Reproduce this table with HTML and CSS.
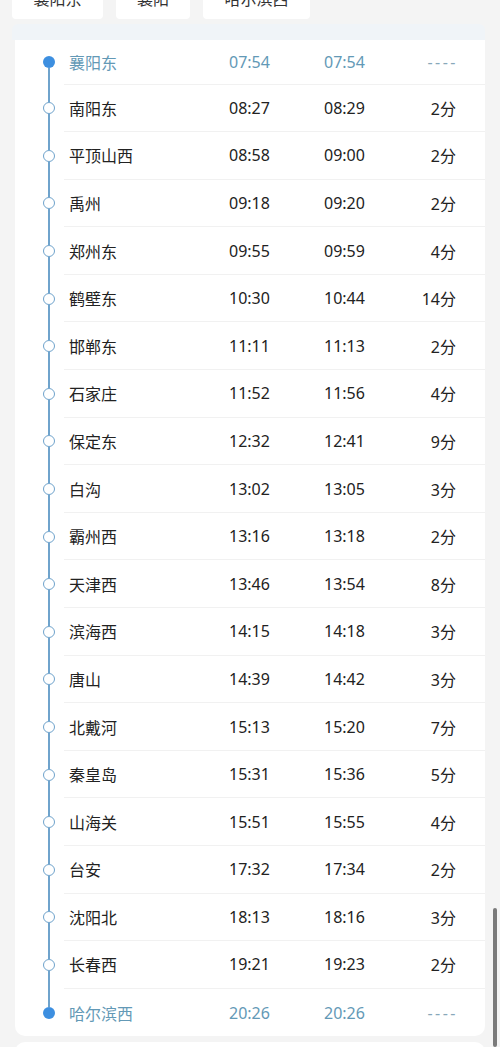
FILE: index.html
```html
<!DOCTYPE html>
<html lang="zh-CN">
<head>
  <meta charset="UTF-8">
  <meta name="viewport" content="width=device-width, initial-scale=1.0">
  <title>经停站</title>
  <link rel="stylesheet" href="styles.css">
</head>
<body>
  <div class="tabs">
    <div class="tab tab-a">襄阳东</div>
    <div class="tab tab-b">襄阳</div>
    <div class="tab tab-c">哈尔滨西</div>
  </div>

  <div class="panel">
    <div class="panel-head"></div>
    <div class="card">
      <div class="row first edge">
        <div class="node"><span class="seg hide"></span><span class="dot fill"></span><span class="seg"></span></div>
        <div class="info"><span class="name">襄阳东</span><span class="arr">07:54</span><span class="dep">07:54</span><span class="stay dash">----</span></div>
      </div>
      <div class="row">
        <div class="node"><span class="seg"></span><span class="dot"></span><span class="seg"></span></div>
        <div class="info"><span class="name">南阳东</span><span class="arr">08:27</span><span class="dep">08:29</span><span class="stay">2分</span></div>
      </div>
      <div class="row">
        <div class="node"><span class="seg"></span><span class="dot"></span><span class="seg"></span></div>
        <div class="info"><span class="name">平顶山西</span><span class="arr">08:58</span><span class="dep">09:00</span><span class="stay">2分</span></div>
      </div>
      <div class="row">
        <div class="node"><span class="seg"></span><span class="dot"></span><span class="seg"></span></div>
        <div class="info"><span class="name">禹州</span><span class="arr">09:18</span><span class="dep">09:20</span><span class="stay">2分</span></div>
      </div>
      <div class="row">
        <div class="node"><span class="seg"></span><span class="dot"></span><span class="seg"></span></div>
        <div class="info"><span class="name">郑州东</span><span class="arr">09:55</span><span class="dep">09:59</span><span class="stay">4分</span></div>
      </div>
      <div class="row">
        <div class="node"><span class="seg"></span><span class="dot"></span><span class="seg"></span></div>
        <div class="info"><span class="name">鹤壁东</span><span class="arr">10:30</span><span class="dep">10:44</span><span class="stay">14分</span></div>
      </div>
      <div class="row">
        <div class="node"><span class="seg"></span><span class="dot"></span><span class="seg"></span></div>
        <div class="info"><span class="name">邯郸东</span><span class="arr">11:11</span><span class="dep">11:13</span><span class="stay">2分</span></div>
      </div>
      <div class="row">
        <div class="node"><span class="seg"></span><span class="dot"></span><span class="seg"></span></div>
        <div class="info"><span class="name">石家庄</span><span class="arr">11:52</span><span class="dep">11:56</span><span class="stay">4分</span></div>
      </div>
      <div class="row">
        <div class="node"><span class="seg"></span><span class="dot"></span><span class="seg"></span></div>
        <div class="info"><span class="name">保定东</span><span class="arr">12:32</span><span class="dep">12:41</span><span class="stay">9分</span></div>
      </div>
      <div class="row">
        <div class="node"><span class="seg"></span><span class="dot"></span><span class="seg"></span></div>
        <div class="info"><span class="name">白沟</span><span class="arr">13:02</span><span class="dep">13:05</span><span class="stay">3分</span></div>
      </div>
      <div class="row">
        <div class="node"><span class="seg"></span><span class="dot"></span><span class="seg"></span></div>
        <div class="info"><span class="name">霸州西</span><span class="arr">13:16</span><span class="dep">13:18</span><span class="stay">2分</span></div>
      </div>
      <div class="row">
        <div class="node"><span class="seg"></span><span class="dot"></span><span class="seg"></span></div>
        <div class="info"><span class="name">天津西</span><span class="arr">13:46</span><span class="dep">13:54</span><span class="stay">8分</span></div>
      </div>
      <div class="row">
        <div class="node"><span class="seg"></span><span class="dot"></span><span class="seg"></span></div>
        <div class="info"><span class="name">滨海西</span><span class="arr">14:15</span><span class="dep">14:18</span><span class="stay">3分</span></div>
      </div>
      <div class="row">
        <div class="node"><span class="seg"></span><span class="dot"></span><span class="seg"></span></div>
        <div class="info"><span class="name">唐山</span><span class="arr">14:39</span><span class="dep">14:42</span><span class="stay">3分</span></div>
      </div>
      <div class="row">
        <div class="node"><span class="seg"></span><span class="dot"></span><span class="seg"></span></div>
        <div class="info"><span class="name">北戴河</span><span class="arr">15:13</span><span class="dep">15:20</span><span class="stay">7分</span></div>
      </div>
      <div class="row">
        <div class="node"><span class="seg"></span><span class="dot"></span><span class="seg"></span></div>
        <div class="info"><span class="name">秦皇岛</span><span class="arr">15:31</span><span class="dep">15:36</span><span class="stay">5分</span></div>
      </div>
      <div class="row">
        <div class="node"><span class="seg"></span><span class="dot"></span><span class="seg"></span></div>
        <div class="info"><span class="name">山海关</span><span class="arr">15:51</span><span class="dep">15:55</span><span class="stay">4分</span></div>
      </div>
      <div class="row">
        <div class="node"><span class="seg"></span><span class="dot"></span><span class="seg"></span></div>
        <div class="info"><span class="name">台安</span><span class="arr">17:32</span><span class="dep">17:34</span><span class="stay">2分</span></div>
      </div>
      <div class="row">
        <div class="node"><span class="seg"></span><span class="dot"></span><span class="seg"></span></div>
        <div class="info"><span class="name">沈阳北</span><span class="arr">18:13</span><span class="dep">18:16</span><span class="stay">3分</span></div>
      </div>
      <div class="row">
        <div class="node"><span class="seg"></span><span class="dot"></span><span class="seg"></span></div>
        <div class="info"><span class="name">长春西</span><span class="arr">19:21</span><span class="dep">19:23</span><span class="stay">2分</span></div>
      </div>
      <div class="row last edge">
        <div class="node"><span class="seg"></span><span class="dot fill"></span><span class="seg hide"></span></div>
        <div class="info"><span class="name">哈尔滨西</span><span class="arr">20:26</span><span class="dep">20:26</span><span class="stay dash">----</span></div>
      </div>
    </div>
  </div>
  <div class="next-card"></div>

  <div class="scrollbar"></div>
</body>
</html>
```

FILE: styles.css
```css
body {
  margin: 0;
  height: 1047px;
  overflow: hidden;
  background-color: #f4f4f4;
  font-family: "Noto Sans", "Noto Sans CJK SC", sans-serif;
  color: #222;
}
.tabs {
  display: flex;
  gap: 13px;
  margin-top: -21px;
  padding-left: 12px;
}
.tab {
  height: 40px;
  line-height: 40px;
  background: #fff;
  border-radius: 4px;
  text-align: center;
  font-size: 16px;
  color: #333;
}
.tab-a { width: 91px; }
.tab-b { width: 74px; }
.tab-c { width: 107px; }
.panel {
  margin: 5px 15px 0 12px;
}
.panel-head {
  height: 16px;
  background: #f0f4f8;
  border-radius: 6px 6px 0 0;
}
.card {
  margin-left: 3px;
  background: #fff;
  border-radius: 0 0 10px 10px;
}
.row {
  display: flex;
  height: 47.6px;
}
.row.first {
  height: 44.5px;
}
.node {
  display: flex;
  flex-direction: column;
  align-items: center;
  width: 12px;
  margin-left: 28px;
  margin-right: 9px;
}
.seg {
  flex: 1;
  width: 2px;
  background: #6fa3cc;
}
.seg.hide {
  background: transparent;
}
.dot {
  box-sizing: border-box;
  width: 12px;
  height: 12px;
  border-radius: 50%;
  border: 1.5px solid #6fa3cc;
  background: #fff;
}
.dot.fill {
  border: none;
  background: #3d8fe0;
}
.info {
  flex: 1;
  display: flex;
  align-items: center;
  padding-left: 5px;
  border-bottom: 1px solid #f1f1f1;
  font-size: 16px;
}
.row.last .info {
  border-bottom: none;
}
.name {
  width: 160px;
}
.arr {
  width: 95px;
}
.dep {
  width: 70px;
}
.stay {
  flex: 1;
  text-align: right;
  padding-right: 29px;
}
.edge .info {
  color: #6399b6;
}
.stay.dash {
  color: #88a8ba;
  letter-spacing: 2.5px;
  padding-right: 27px;
}
.next-card {
  margin: 6px 15px 0 15px;
  height: 30px;
  background: #fff;
  border-radius: 10px 10px 0 0;
}
.scrollbar {
  position: fixed;
  right: 3px;
  top: 908px;
  width: 4px;
  height: 139px;
  background: #7a7a7a;
  border-radius: 2px;
}
```
